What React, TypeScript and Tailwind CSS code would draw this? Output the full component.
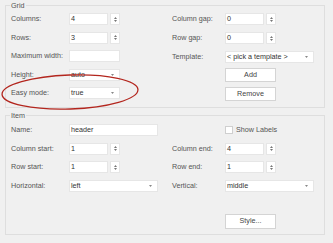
import React from "react"

const font = { fontFamily: '"Liberation Sans", Arial, sans-serif' }

function Label({ children, w }: { children: React.ReactNode; w: string }) {
  return <div className={`${w} shrink-0 text-[7.2px] text-[#555555] leading-[12px]`}>{children}</div>
}

function Spin({ value }: { value: string }) {
  return (
    <div className="flex h-[12px] gap-[2px]">
      <div className="w-[39px] h-full bg-white border border-[#e6e6e6] text-[7.2px] leading-[10px] pl-[1px] text-[#333]">
        {value}
      </div>
      <div className="w-[10px] h-full bg-white border border-[#e6e6e6] flex flex-col items-center justify-center gap-[1px]">
        <svg width="3" height="2" viewBox="0 0 3 2"><path d="M1.5 0L3 2H0z" fill="#777" /></svg>
        <svg width="3" height="2" viewBox="0 0 3 2"><path d="M0 0h3L1.5 2z" fill="#777" /></svg>
      </div>
    </div>
  )
}

function Select({ value, w }: { value: string; w: string }) {
  return (
    <div className={`${w} h-[12px] bg-white border border-[#e6e6e6] flex items-center justify-between pl-[1px] pr-[5px]`}>
      <span className="text-[7.2px] leading-[10px] text-[#333]">{value}</span>
      <svg width="3" height="2" viewBox="0 0 3 2"><path d="M0 0h3L1.5 2z" fill="#888" /></svg>
    </div>
  )
}

function Text({ value, w }: { value: string; w: string }) {
  return (
    <div className={`${w} h-[12px] bg-white border border-[#e6e6e6] text-[7.2px] leading-[10px] pl-[1px] text-[#333]`}>
      {value}
    </div>
  )
}

function Button({ children, h = "h-[14px]" }: { children: React.ReactNode; h?: string }) {
  return (
    <div className={`w-[51px] ${h} bg-white border border-[#d4d4d4] flex items-center justify-center text-[7.2px] text-[#444]`}>
      {children}
    </div>
  )
}

function Row({ children }: { children: React.ReactNode }) {
  return <div className="flex items-center h-[12px]">{children}</div>
}

export default function App() {
  return (
    <div className="relative w-[333px] h-[243px] bg-[#f0f0f0] overflow-hidden pt-[0.5px] pl-[5px] pr-[8px]" style={font}>
      <fieldset className="border border-[#dedede] pl-[5px] pr-[10px] pt-[3.5px] pb-[6px]">
        <legend className="-ml-[1px] px-[1px] text-[7.2px] leading-[9px] text-[#555555]">Grid</legend>
        <div className="flex">
          <div className="w-[161px] flex flex-col gap-[6.5px]">
            <Row><Label w="w-[58px]">Columns:</Label><Spin value="4" /></Row>
            <Row><Label w="w-[58px]">Rows:</Label><Spin value="3" /></Row>
            <Row><Label w="w-[58px]">Maximum width:</Label><Text value="" w="w-[51px]" /></Row>
            <Row><Label w="w-[58px]">Height:</Label><Select value="auto" w="w-[51px]" /></Row>
            <Row><Label w="w-[58px]">Easy mode:</Label><Select value="true" w="w-[51px]" /></Row>
          </div>
          <div className="flex flex-col">
            <Row><Label w="w-[53px]">Column gap:</Label><Spin value="0" /></Row>
            <div className="mt-[7px]"><Row><Label w="w-[53px]">Row gap:</Label><Spin value="0" /></Row></div>
            <div className="mt-[6.5px]"><Row><Label w="w-[53px]">Template:</Label><Select value="< pick a template >" w="w-[89px]" /></Row></div>
            <div className="mt-[5.5px] ml-[53px] flex flex-col gap-[5px]">
              <Button>Add</Button>
              <Button>Remove</Button>
            </div>
          </div>
        </div>
      </fieldset>

      <fieldset className="mt-[3px] border border-[#dedede] pl-[5px] pr-[10px] pt-[4px] pb-[5px]">
        <legend className="-ml-[1px] px-[1px] text-[7.2px] leading-[9px] text-[#555555]">Item</legend>
        <div className="flex">
          <div className="w-[161px] flex flex-col gap-[6.5px]">
            <Row><Label w="w-[58px]">Name:</Label><Text value="header" w="w-[89px]" /></Row>
            <Row><Label w="w-[58px]">Column start:</Label><Spin value="1" /></Row>
            <Row><Label w="w-[58px]">Row start:</Label><Spin value="1" /></Row>
            <Row><Label w="w-[58px]">Horizontal:</Label><Select value="left" w="w-[89px]" /></Row>
          </div>
          <div className="flex flex-col gap-[6.5px]">
            <Row>
              <div className="ml-[53px] w-[8px] h-[8px] bg-white border border-[#cfcfcf]" />
              <span className="ml-[3px] text-[7.2px] text-[#555555]">Show Labels</span>
            </Row>
            <Row><Label w="w-[53px]">Column end:</Label><Spin value="4" /></Row>
            <Row><Label w="w-[53px]">Row end:</Label><Spin value="1" /></Row>
            <Row><Label w="w-[53px]">Vertical:</Label><Select value="middle" w="w-[89px]" /></Row>
            <div className="mt-[16px] ml-[53px]"><Button h="h-[15px]">Style...</Button></div>
          </div>
        </div>
      </fieldset>

      <svg className="absolute left-0 top-0 pointer-events-none" width="333" height="243">
        <ellipse cx="70" cy="92" rx="68" ry="17" transform="rotate(-2 70 92)" fill="none" stroke="#b3261e" strokeWidth="1.3" />
      </svg>
    </div>
  )
}
